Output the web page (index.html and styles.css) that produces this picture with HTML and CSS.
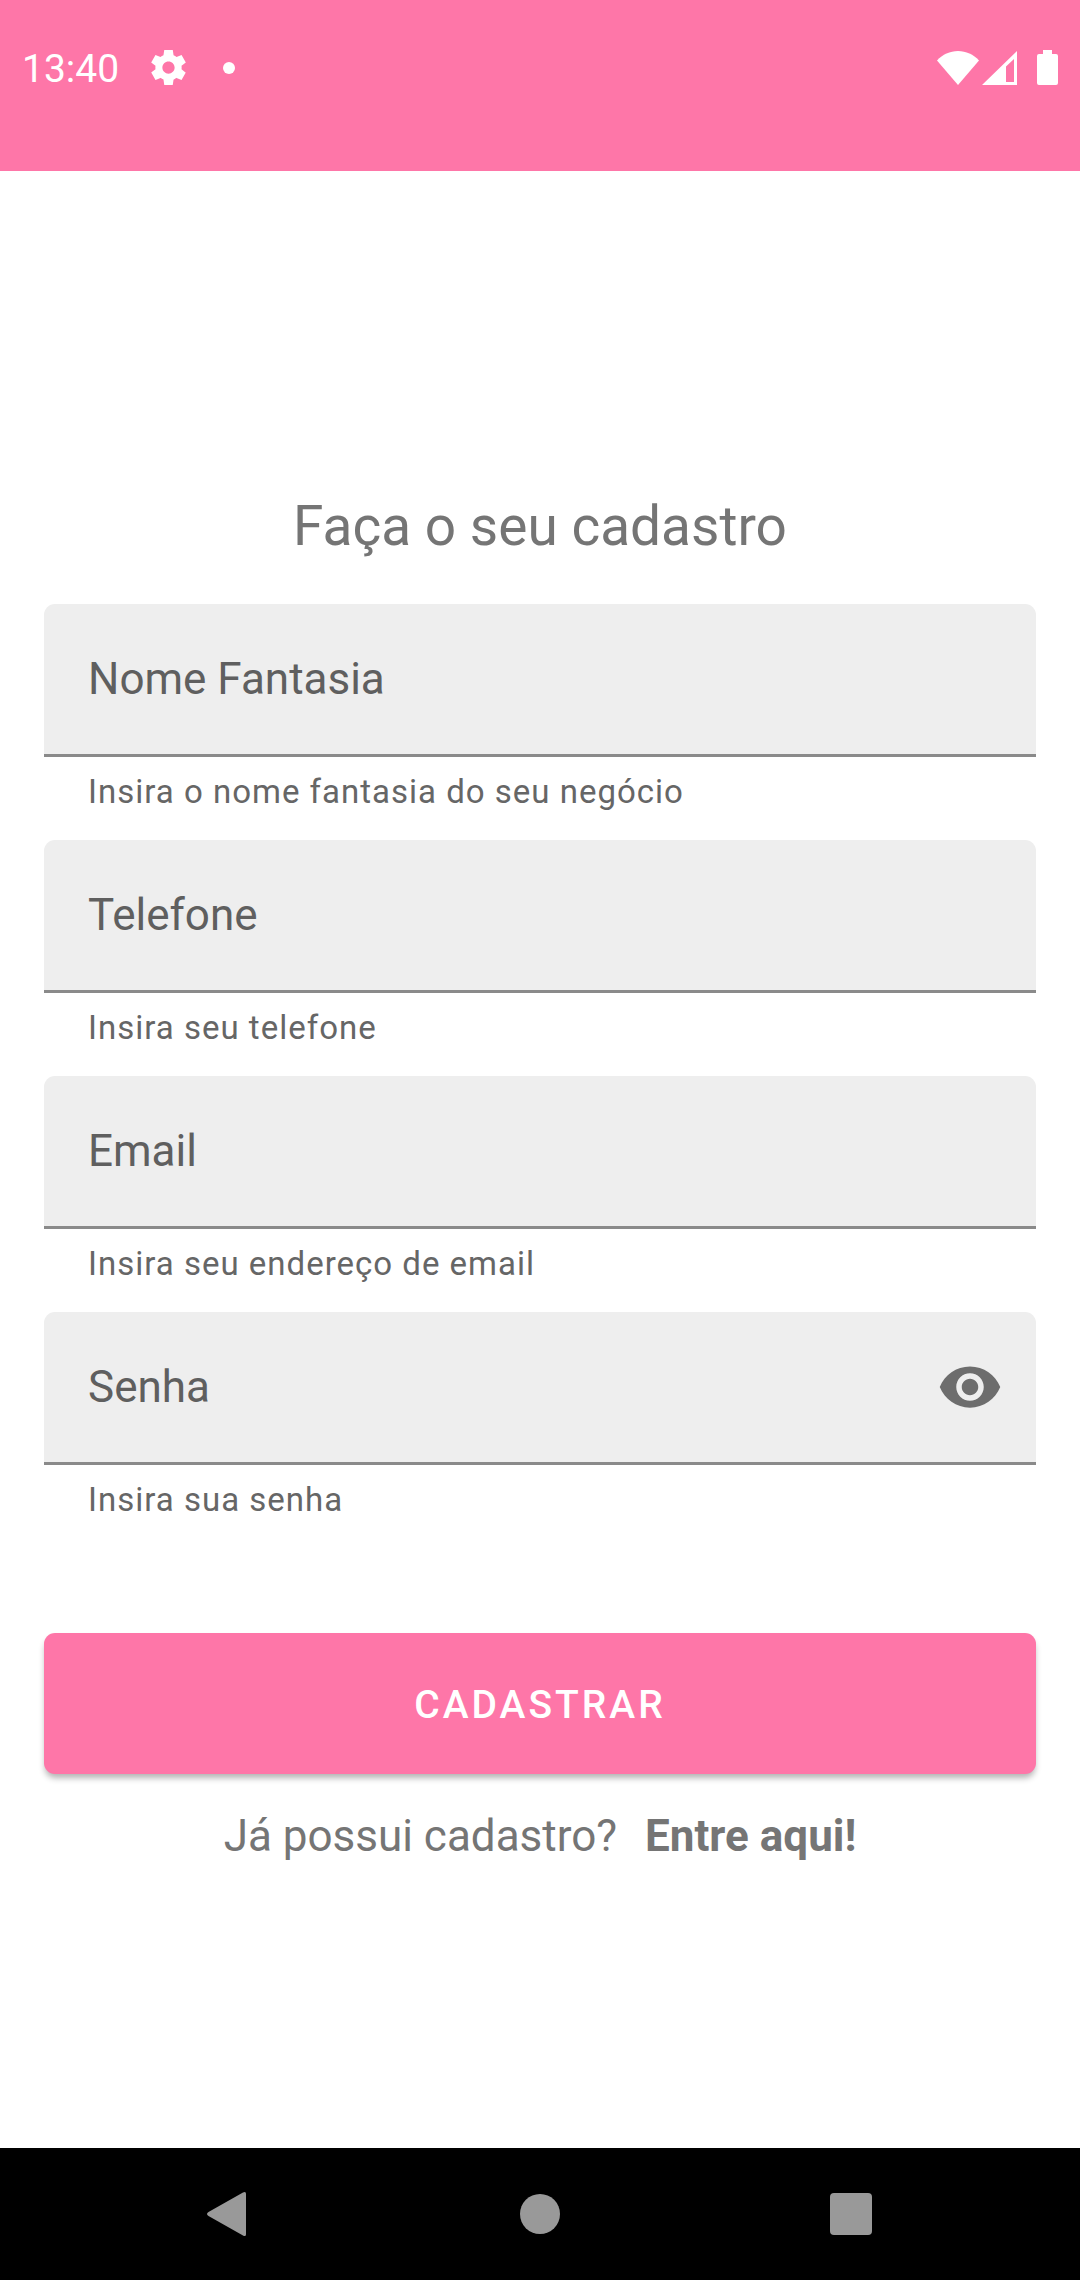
FILE: index.html
```html
<!DOCTYPE html>
<html lang="pt-BR">
<head>
<meta charset="utf-8">
<meta name="viewport" content="width=device-width, initial-scale=1">
<title>Cadastro</title>
<link rel="stylesheet" href="styles.css">
</head>
<body>
<div class="screen">
  <header class="top-bar">
    <div class="status">
      <div class="status-group status-left">
        <time class="clock">13:40</time>
        <svg class="gear" viewBox="2 2 20 20" aria-hidden="true"><path d="M19.44 12.99l-.01.02c.04-.33.08-.67.08-1.01 0-.34-.03-.66-.07-.99l.01.02 2.44-1.92-2.43-4.22-2.87 1.16.01.01c-.52-.4-1.09-.74-1.71-1h.01L14.440 2H9.570l-.44 3.070h.01c-.62.26-1.190.6-1.710 1l.01-.01-2.880-1.170-2.440 4.220 2.440 1.920.01-.02c-.04.33-.07.65-.07.99 0 .34.03.68.08 1.010l-.01-.02-2.100 1.650-.33.26 2.430 4.200 2.880-1.150-.02-.04c.53.41 1.100.75 1.730 1.010h-.03L9.580 22h4.850s.03-.18.06-.42l.38-2.650h-.01c.62-.26 1.200-.6 1.730-1.010l-.02.04 2.880 1.150 2.430-4.200s-.14-.12-.33-.26l-2.110-1.660zM12 15.500c-1.930 0-3.500-1.570-3.500-3.500s1.570-3.500 3.500-3.500 3.500 1.570 3.500 3.500-1.570 3.500-3.500 3.500z"/></svg>
        <span class="dot"></span>
      </div>
      <div class="status-group status-right">
        <svg class="wifi" viewBox="0 0 42 34" aria-hidden="true"><path d="M0 9.500C5.500 3.500 13 0 21 0s15.500 3.500 21 9.500L21 34z"/></svg>
        <svg class="signal" viewBox="0 0 35 34" aria-hidden="true"><path fill-rule="evenodd" d="M35 0v34H0zM24 15.500V31h8V8z"/></svg>
        <svg class="battery" viewBox="0 0 21 35" aria-hidden="true"><path d="M6 0h9v4h4a2 2 0 0 1 2 2v27a2 2 0 0 1-2 2H2a2 2 0 0 1-2-2V6a2 2 0 0 1 2-2h4z"/></svg>
      </div>
    </div>
  </header>

  <main class="content">
    <h1 class="title">Faça o seu cadastro</h1>
    <form class="form">
      <div class="fields">
        <div class="field">
          <div class="box">
            <label class="label" for="nome">Nome Fantasia</label>
            <input class="input" id="nome" type="text" aria-describedby="nome-ajuda">
          </div>
          <p class="helper" id="nome-ajuda">Insira o nome fantasia do seu negócio</p>
        </div>
        <div class="field">
          <div class="box">
            <label class="label" for="telefone">Telefone</label>
            <input class="input" id="telefone" type="tel" aria-describedby="telefone-ajuda">
          </div>
          <p class="helper" id="telefone-ajuda">Insira seu telefone</p>
        </div>
        <div class="field">
          <div class="box">
            <label class="label" for="email">Email</label>
            <input class="input" id="email" type="email" aria-describedby="email-ajuda">
          </div>
          <p class="helper" id="email-ajuda">Insira seu endereço de email</p>
        </div>
        <div class="field">
          <div class="box">
            <label class="label" for="senha">Senha</label>
            <input class="input" id="senha" type="password" aria-describedby="senha-ajuda">
            <button class="reveal" type="button" aria-label="Mostrar senha">
              <svg class="eye" viewBox="0 0 24 24" aria-hidden="true"><path d="M12 4.500C7 4.500 2.730 7.610 1 12c1.730 4.390 6 7.500 11 7.500s9.270-3.110 11-7.500c-1.730-4.390-6-7.500-11-7.500zM12 17c-2.760 0-5-2.240-5-5s2.240-5 5-5 5 2.240 5 5-2.240 5-5 5zm0-8c-1.660 0-3 1.340-3 3s1.340 3 3 3 3-1.340 3-3-1.340-3-3-3z"/></svg>
            </button>
          </div>
          <p class="helper" id="senha-ajuda">Insira sua senha</p>
        </div>
      </div>
      <button class="submit" type="submit">CADASTRAR</button>
    </form>
    <p class="login">Já possui cadastro? <a class="login-link" href="#entrar">Entre aqui!</a></p>
  </main>

  <nav class="nav-bar" aria-label="Sistema">
    <button class="nav-button" type="button" aria-label="Voltar"><svg class="nav-icon" viewBox="3 0 44 46" aria-hidden="true"><path d="M39 1.500c2-1.200 3-.5 3 1.500v40c0 2-1 2.700-3 1.500L4.500 25c-2-1.200-2-2.800 0-4z"/></svg></button>
    <button class="nav-button" type="button" aria-label="Início"><svg class="nav-icon" viewBox="0 0 44 46" aria-hidden="true"><circle cx="22" cy="23" r="20"/></svg></button>
    <button class="nav-button" type="button" aria-label="Recentes"><svg class="nav-icon" viewBox="0 0 44 46" aria-hidden="true"><rect x="1" y="2" width="42" height="42" rx="4"/></svg></button>
  </nav>
</div>
</body>
</html>
```

FILE: styles.css
```css
* {
  box-sizing: border-box;
}

body {
  margin: 0;
  background: #fff;
  color: #757575;
  font-family: Roboto, "Noto Sans", sans-serif;
}

button {
  padding: 0;
  border: 0;
  background: none;
  font-family: inherit;
}

svg {
  display: block;
  flex: none;
}

.screen {
  display: flex;
  flex-direction: column;
  min-height: 100vh;
}

/* System status bar and empty title bar */
.top-bar {
  padding-bottom: 36px;
  background: #fe76a8;
}

.status {
  display: flex;
  align-items: center;
  justify-content: space-between;
  height: 135px;
  padding: 0 22px;
  color: #fff;
  fill: #fff;
}

.status-group {
  display: flex;
  align-items: center;
}

.clock {
  padding-top: 2px;
  font-size: 39px;
  line-height: 46px;
}

.gear {
  width: 35px;
  height: 35px;
  margin-left: 32px;
}

.dot {
  width: 12px;
  height: 12px;
  margin-left: 37px;
  border-radius: 50%;
  background: #fff;
}

.wifi {
  width: 42px;
  height: 34px;
}

.signal {
  width: 35px;
  height: 34px;
  margin-left: 3px;
}

.battery {
  width: 21px;
  height: 35px;
  margin-left: 20px;
}

/* Sign-up form */
.content {
  display: flex;
  flex: 1;
  flex-direction: column;
  justify-content: center;
  padding: 36px 44px 0;
}

.title {
  margin: 0 0 46px;
  font-size: 55px;
  font-weight: 400;
  line-height: 64px;
  text-align: center;
}

.fields {
  display: grid;
  gap: 29px;
}

.box {
  display: grid;
  grid-template-columns: 1fr auto;
  align-items: center;
  height: 153px;
  border-bottom: 3px solid #8a8a8a;
  border-radius: 11px 11px 0 0;
  background: #eee;
}

/* The label rests over the empty input, in the same grid row */
.label,
.input {
  grid-row: 1;
  grid-column: 1;
  font-size: 44px;
  line-height: 52px;
}

.label {
  padding-left: 44px;
  color: #5f5f5f;
  pointer-events: none;
}

.input {
  width: 100%;
  height: 100%;
  padding: 0 44px;
  border: 0;
  outline: 0;
  background: transparent;
  color: #212121;
  font-family: inherit;
}

.reveal {
  grid-row: 1;
  grid-column: 2;
  padding: 0 33px;
}

.eye {
  width: 66px;
  height: 66px;
  fill: #6d6d6d;
}

.helper {
  margin: 0;
  padding: 16px 44px 0;
  color: #666;
  font-size: 33px;
  line-height: 38px;
  letter-spacing: 1px;
}

.submit {
  display: block;
  width: 100%;
  height: 141px;
  margin-top: 114px;
  padding-top: 4px;
  border-radius: 11px;
  background: #fe76a8;
  box-shadow: 0 5px 6px -1px rgba(0, 0, 0, 0.3);
  color: #fff;
  font-size: 39px;
  font-weight: 500;
  letter-spacing: 3px;
}

.login {
  display: flex;
  justify-content: center;
  gap: 28px;
  margin: 36px 0 0;
  font-size: 44px;
  line-height: 52px;
}

.login-link {
  color: inherit;
  font-weight: 700;
  text-decoration: none;
}

/* System navigation bar */
.nav-bar {
  display: grid;
  grid-template-columns: repeat(3, 1fr);
  height: 132px;
  padding: 0 74px;
  background: #000;
}

.nav-button {
  display: flex;
  align-items: center;
  justify-content: center;
}

.nav-icon {
  width: 44px;
  height: 46px;
  fill: #999;
}
```
